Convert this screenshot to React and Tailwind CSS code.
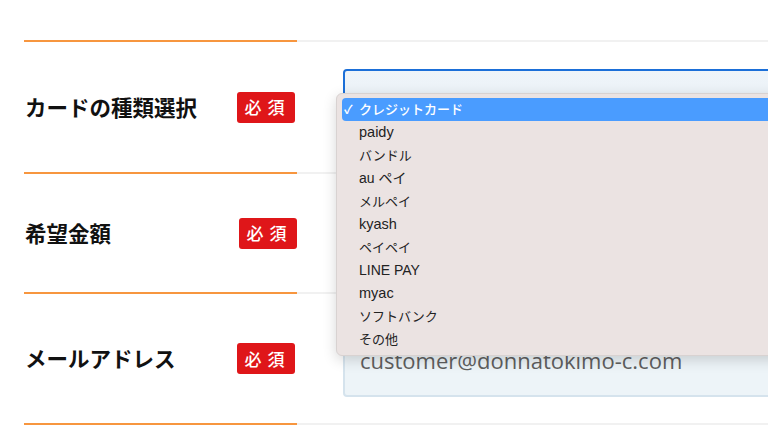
import React from 'react';

const OPTIONS = [
  { label: 'paidy', size: 'text-[14.5px]' },
  { label: 'バンドル', size: 'text-[13px]' },
  { label: 'au ペイ', size: 'text-[14px]' },
  { label: 'メルペイ', size: 'text-[13px]' },
  { label: 'kyash', size: 'text-[14.5px]' },
  { label: 'ペイペイ', size: 'text-[13px]' },
  { label: 'LINE PAY', size: 'text-[14px]' },
  { label: 'myac', size: 'text-[14.5px]' },
  { label: 'ソフトバンク', size: 'text-[13px]' },
  { label: 'その他', size: 'text-[13px]' }
];

const jp = { fontFamily: '"Noto Sans CJK JP", "Noto Sans", sans-serif' };
const menuFont = { fontFamily: '"Liberation Sans", "Noto Sans CJK JP", sans-serif' };

const Divider = () => (
  <div className="flex h-[2px]">
    <div className="w-[24px] shrink-0" />
    <div className="w-[273px] shrink-0 bg-[#f7963f]" />
    <div className="flex-1 bg-[#f1f1f1]" />
  </div>
);

const Badge = () => (
  <span
    className="flex h-[31px] w-[58px] items-center justify-center rounded-[3px] bg-[#df1619] pl-[3px] text-[17px] font-medium tracking-[0.35em] text-white"
    style={jp}
  >
    必須
  </span>
);

const Row = ({ label, height, shift, children }) => (
  <div className={`flex ${height}`}>
    <div className="w-[25px] shrink-0" />
    <div className="flex w-[272px] shrink-0 items-center justify-between">
      <span className="text-[21.5px] font-bold text-[#111]" style={jp}>{label}</span>
      <div className={shift}>
        <Badge />
      </div>
    </div>
    <div className="flex min-w-0 flex-1 items-center pl-[46px]">{children}</div>
  </div>
);

const App = () => {
  return (
    <div className="relative h-[435px] w-[768px] overflow-hidden bg-white">
      <div className="h-[40px]" />
      <Divider />
      <Row label="カードの種類選択" height="h-[130px]" shift="mr-[2px]">
        <div className="h-[76px] w-[460px] shrink-0 rounded-[4px] border-2 border-[#1b6fd8] bg-gradient-to-b from-[#eef4f9] to-[#e9f0f5]" />
      </Row>
      <Divider />
      <Row label="希望金額" height="h-[118px]" shift="">
        <div className="h-[76px] w-[460px] shrink-0 rounded-[4px] border-2 border-[#d5e3ed] bg-[#edf4f8]" />
      </Row>
      <Divider />
      <Row label="メールアドレス" height="h-[129px]" shift="mr-[2px]">
        <div className="flex h-[76px] w-[460px] shrink-0 items-center rounded-[4px] border-2 border-[#d5e3ed] bg-[#edf4f8] pl-[15px] pt-[3px]">
          <span className="text-[22px] leading-none text-[#5f5f5f]" style={{ fontFamily: '"Open Sans", sans-serif' }}>
            customer@donnatokimo-c.com
          </span>
        </div>
      </Row>
      <Divider />

      {/* open select menu */}
      <div
        className="absolute left-[336px] top-[93px] w-[460px] rounded-[6px] border border-[#d8d2d1] bg-[#ebe3e2] px-[5px] py-[4px] shadow-[0_4px_14px_rgba(0,0,0,0.16)]"
        style={menuFont}
      >
        <div className="flex h-[23px] items-center rounded-[4px] bg-[#4a9cff] pl-[2px] text-[13px] font-medium text-white">
          <span className="w-[15px] text-[12px] font-bold">✓</span>
          <span>クレジットカード</span>
        </div>
        {OPTIONS.map((opt) => (
          <div key={opt.label} className={`flex h-[23px] items-center pl-[17px] text-[#222] ${opt.size}`}>
            {opt.label}
          </div>
        ))}
      </div>
    </div>
  );
};

export default App;
